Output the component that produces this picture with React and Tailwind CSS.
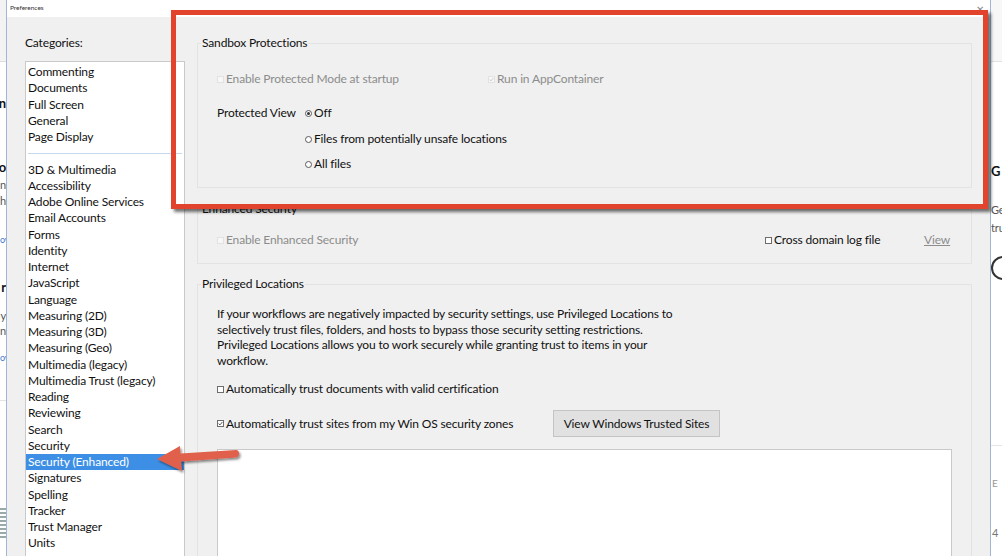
import React from "react";

const FONT = { fontFamily: 'Lato, "Noto Sans", sans-serif' };

const topCats = ["Commenting", "Documents", "Full Screen", "General", "Page Display"];
const cats = [
  "3D & Multimedia",
  "Accessibility",
  "Adobe Online Services",
  "Email Accounts",
  "Forms",
  "Identity",
  "Internet",
  "JavaScript",
  "Language",
  "Measuring (2D)",
  "Measuring (3D)",
  "Measuring (Geo)",
  "Multimedia (legacy)",
  "Multimedia Trust (legacy)",
  "Reading",
  "Reviewing",
  "Search",
  "Security",
  "Security (Enhanced)",
  "Signatures",
  "Spelling",
  "Tracker",
  "Trust Manager",
  "Units",
];

function Box({ disabled, checked }) {
  return (
    <span
      className={
        "inline-flex items-center justify-center w-[7px] h-[7px] mr-[2px] shrink-0 " +
        (disabled ? "border border-[#e2e2e2] bg-[#f7f7f7]" : "border border-[#6d6d6d] bg-white")
      }
    >
      {checked && (
        <svg width="5" height="5" viewBox="0 0 5 5">
          <path d="M0.6 2.6 L2 3.9 L4.4 1" fill="none" stroke={disabled ? "#c8c8c8" : "#444"} strokeWidth="0.9" />
        </svg>
      )}
    </span>
  );
}

function Radio({ on }) {
  return (
    <span className="inline-flex items-center justify-center w-[7px] h-[7px] mr-[2px] rounded-full border border-[#5a5a5a] bg-white shrink-0">
      {on && <span className="w-[3px] h-[3px] rounded-full bg-[#333]" />}
    </span>
  );
}

function Group({ title, className = "", children }) {
  return (
    <fieldset className={"border border-[#e3e3e3] pl-[19px] " + className}>
      <legend className="-ml-[16px] px-[1px] leading-[16px] text-[#111]">{title}</legend>
      {children}
    </fieldset>
  );
}

export default function App() {
  return (
    <div
      className="relative w-[1002px] h-[556px] overflow-hidden bg-white flex text-[12px] tracking-[-0.15px] text-[#111]"
      style={FONT}
    >
      {/* background app, left sliver */}
      <div className="w-[6px] shrink-0 flex flex-col overflow-hidden">
        <div className="h-[62px] bg-[#f3f3f3] border-b border-[#dedede]" />
        <div className="relative flex-1 bg-white overflow-hidden text-[11px] leading-[16px]">
          <div className="absolute right-0 top-[33px] font-bold text-[13px]">n</div>
          <div className="absolute right-0 top-[97px] font-bold text-[13px]">o</div>
          <div className="absolute right-0 top-[115px] text-[#555]">n</div>
          <div className="absolute right-0 top-[131px] text-[#555]">h</div>
          <div className="absolute left-0 top-[170px] text-[#3b7bd4] text-[9px]">ov</div>
          <div className="absolute right-0 top-[217px] font-bold text-[13px]">r</div>
          <div className="absolute right-0 top-[246px] text-[#555]">y</div>
          <div className="absolute right-0 top-[261px] text-[#555]">n</div>
          <div className="absolute left-0 top-[288px] text-[#3b7bd4] text-[9px]">ov</div>
          <div className="absolute left-0 right-0 top-[338px] border-t border-[#e2e2e2]" />
          <div className="absolute left-0 top-[446px] w-[6px] h-[32px] bg-[repeating-linear-gradient(#9aa_0_2px,#fff_2px_4px)]" />
        </div>
      </div>

      {/* dialog */}
      <div className="w-[985px] shrink-0 flex flex-col border-l border-r border-[#9fb6d6] bg-[#f0f0f0]">
        <div className="h-[17px] bg-white flex items-center justify-between pl-[3px] pr-[6px]">
          <span className="text-[6.5px] text-[#333] leading-none tracking-normal">Preferences</span>
          <span className="text-[10px] text-[#888] leading-none">✕</span>
        </div>
        <div className="flex-1 flex min-h-0">
          {/* categories */}
          <div className="w-[178px] shrink-0 pl-[18px] flex flex-col">
            <div className="mt-[18px] leading-[16px]">Categories:</div>
            <div className="mt-[10px] flex-1 bg-white border border-[#c9c9c9] border-b-0 pt-[2px] leading-[16.25px]">
              {topCats.map((c) => (
                <div key={c} className="pl-[2px] h-[16.25px]">{c}</div>
              ))}
              <div className="h-[16.25px] flex items-center px-[2px]">
                <div className="w-full border-t border-[#c5d9ee]" />
              </div>
              {cats.map((c) => (
                <div
                  key={c}
                  className={
                    "pl-[2px] h-[16.25px] whitespace-nowrap " +
                    (c === "Security (Enhanced)" ? "bg-[#3d8fe5] text-white" : "")
                  }
                >
                  {c}
                </div>
              ))}
            </div>
          </div>

          {/* content */}
          <div className="flex-1 pl-[12px] pr-[18px] flex flex-col">
            <Group title="Sandbox Protections" className="mt-[18px] pb-[15px]">
              <div className="pt-[20px] flex items-center h-[36px] text-[#8c8c8c]">
                <div className="w-[271px] flex items-center">
                  <Box disabled />
                  <span>Enable Protected Mode at startup</span>
                </div>
                <div className="flex items-center">
                  <Box disabled checked />
                  <span>Run in AppContainer</span>
                </div>
              </div>
              <div className="mt-[18px] flex">
                <div className="w-[88px] leading-[16px]">Protected View</div>
                <div className="flex flex-col leading-[16px]">
                  <div className="flex items-center">
                    <Radio on />
                    <span>Off</span>
                  </div>
                  <div className="flex items-center mt-[10px]">
                    <Radio />
                    <span>Files from potentially unsafe locations</span>
                  </div>
                  <div className="flex items-center mt-[9px]">
                    <Radio />
                    <span>All files</span>
                  </div>
                </div>
              </div>
            </Group>

            <Group title="Enhanced Security" className="mt-[13px] pb-[15px]">
              <div className="pt-[15px] flex items-center leading-[16px]">
                <div className="w-[548px] flex items-center text-[#8c8c8c]">
                  <Box disabled />
                  <span>Enable Enhanced Security</span>
                </div>
                <div className="w-[159px] flex items-center">
                  <Box />
                  <span>Cross domain log file</span>
                </div>
                <span className="text-[#8c8c8c] underline">View</span>
              </div>
            </Group>

            <Group title="Privileged Locations" className="mt-[12px] flex-1 border-b-0">
              <p className="pt-[14px] leading-[15.5px]">
                If your workflows are negatively impacted by security settings, use Privileged Locations to
                <br />
                selectively trust files, folders, and hosts to bypass those security setting restrictions.
                <br />
                Privileged Locations allows you to work securely while granting trust to items in your
                <br />
                workflow.
              </p>
              <div className="mt-[13px] flex items-center leading-[16px]">
                <Box />
                <span>Automatically trust documents with valid certification</span>
              </div>
              <div className="mt-[13px] flex items-center h-[27px]">
                <div className="w-[336px] flex items-center">
                  <Box checked />
                  <span>Automatically trust sites from my Win OS security zones</span>
                </div>
                <button className="w-[167px] h-[27px] bg-[#e1e1e1] border border-[#c4c4c4] text-[12px] text-[#111]">
                  View Windows Trusted Sites
                </button>
              </div>
              <div className="mt-[12px] mr-[19px] h-[120px] bg-white border border-[#c9c9c9]" />
            </Group>
          </div>
        </div>
      </div>

      {/* background app, right sliver */}
      <div className="flex-1 flex flex-col overflow-hidden">
        <div className="h-[62px] bg-[#f7f7f7] border-b border-[#e2e2e2]" />
        <div className="relative flex-1 bg-white text-[11px] leading-[16px]">
          <div className="absolute left-[0px] top-[101px] font-bold text-[13px]">G</div>
          <div className="absolute left-[0px] top-[140px] text-[#555]">Ge</div>
          <div className="absolute left-[0px] top-[158px] text-[#555]">tru</div>
          <div className="absolute left-[0px] top-[194px] w-[24px] h-[24px] rounded-full border-2 border-[#333]" />
          <div className="absolute left-0 right-0 top-[383px] border-t border-[#e6e6e6]" />
          <div className="absolute left-[1px] top-[413px] text-[#999] text-[10px]">E</div>
          <div className="absolute left-[1px] top-[463px] text-[#777]">4</div>
        </div>
      </div>

      {/* annotation: red frame */}
      <div className="absolute left-[171px] top-[10px] w-[817px] h-[199px] border-[5px] border-[#e1432c] shadow-[3px_3px_3px_rgba(0,0,0,0.55)] pointer-events-none" />

      {/* annotation: arrow */}
      <svg className="absolute left-[150px] top-[440px] pointer-events-none" width="100" height="36" viewBox="0 0 100 36">
        <defs>
          <filter id="sh" x="-20%" y="-50%" width="140%" height="200%">
            <feDropShadow dx="1.5" dy="2" stdDeviation="1.2" floodColor="#000" floodOpacity="0.45" />
          </filter>
        </defs>
        <path
          d="M7 19 L30 6 L30.5 13.5 L86 10 Q89 10 89 13.5 Q89 17 86 17.5 L31 21.5 L32 31 Z"
          fill="#e0604b"
          filter="url(#sh)"
        />
      </svg>
    </div>
  );
}
